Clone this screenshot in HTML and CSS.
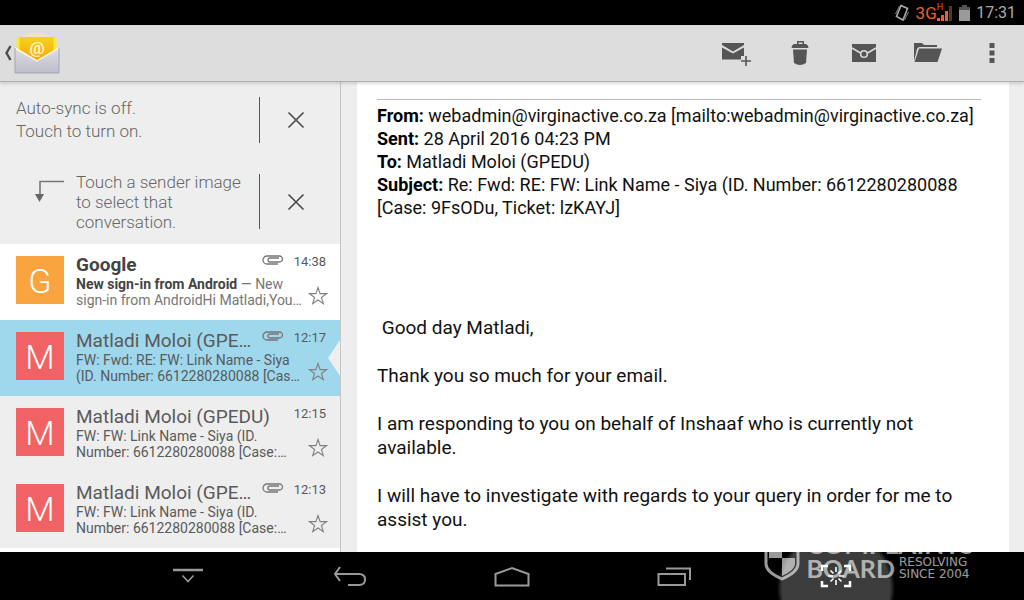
FILE: index.html
```html
<!DOCTYPE html>
<html lang="en">
<head>
    <meta charset="UTF-8">
    <meta name="viewport" content="width=device-width, initial-scale=1.0">
    <title>Email</title>
    <link rel="stylesheet" href="styles.css">
</head>
<body>
    <!-- Shared icons -->
    <svg class="sprite" width="0" height="0">
        <symbol id="close" viewBox="0 0 18 18"><path d="M1.500 1.500l15 15M16.500 1.500l-15 15" fill="none" stroke="#4a4a4a" stroke-width="1.600"/></symbol>
        <symbol id="clip" viewBox="0 0 22 10"><path d="M17 3H8a2 2 0 0 0 0 4h9.500a3 3 0 0 0 0-6H5a4 4 0 0 0 0 8h11" fill="none" stroke="#777" stroke-width="1.300"/></symbol>
        <symbol id="star" viewBox="0 0 20 20"><path d="M10 1.500l2.100 6.100h6.400l-5.100 3.900 1.900 6.200-5.300-3.700-5.300 3.700 1.900-6.200-5.100-3.900h6.400z" fill="none" stroke="#808080" stroke-width="1.100"/></symbol>
    </svg>

    <div class="status-bar">
        <svg width="16" height="18" viewBox="0 0 16 18" fill="none" stroke="#aaa" stroke-width="1.600">
            <path d="M7 1.500l6.500 3L9 16l-6.500-3.500z"/>
            <path d="M1.500 10l4-8M14.500 8l-4 8" stroke="#888" stroke-width="1"/>
        </svg>
        <div class="signal">
            <span class="network">3G</span>
            <span class="hspa">H</span>
            <svg width="16" height="16" viewBox="0 0 16 16">
                <path d="M0 16v-3h3v3zM4 16v-6h3v6zM8 16V6h3v10z" fill="#e8642a"/>
                <path d="M12 16V1h3v15z" fill="#533a22"/>
            </svg>
        </div>
        <svg width="11" height="16" viewBox="0 0 11 16">
            <path d="M3 0h5v2h3v14H0V2h3z" fill="#9a9a9a"/>
            <path d="M3 0h5v2h3v3H0V2h3z" fill="#555"/>
        </svg>
        <span class="clock">17:31</span>
    </div>

    <header class="action-bar">
        <button class="up" aria-label="Back">
            <svg width="8" height="16" viewBox="0 0 8 16"><path d="M6.500 1L2.500 8l4 7" fill="none" stroke="#4d4d4d" stroke-width="2.400"/></svg>
            <svg width="46" height="42" viewBox="0 0 46 42">
                <defs>
                    <linearGradient id="gold" x2="0" y2="1"><stop stop-color="#f5d21c"/><stop offset="1" stop-color="#f7a50c"/></linearGradient>
                    <linearGradient id="paper" x2="0" y2="1"><stop stop-color="#dedee4"/><stop offset="1" stop-color="#bdbdcb"/></linearGradient>
                </defs>
                <path d="M8 5Q23-3 37 5z" fill="#efe5c4"/>
                <path d="M3 5h39v15L23 30 3 18z" fill="url(#gold)"/>
                <path d="M4 5v13M41 5v13" stroke="#fbe93a" stroke-width="3"/>
                <path d="M1 16l22 13 22-13v25H1z" fill="url(#paper)"/>
                <path d="M1 16l22 13 22-13" fill="none" stroke="#fff8e0" stroke-width="1.500"/>
                <path d="M1 16v25h44V16" fill="none" stroke="#a4a4b0"/>
                <text x="23" y="22" text-anchor="middle" class="at">@</text>
            </svg>
        </button>
        <nav class="actions">
            <button aria-label="Compose">
                <svg width="32" height="28" viewBox="0 0 32 28">
                    <path d="M2 4h22v2l-11 6.500L2 6zM2 8.500l11 6 11-6V17h-3v3.500H2z" fill="#555"/>
                    <path d="M26 17v10M21 22h10" stroke="#555" stroke-width="1.600"/>
                </svg>
            </button>
            <button aria-label="Delete">
                <svg width="18" height="26" viewBox="0 0 18 26" fill="#555">
                    <path d="M6 1h7v4h-1.500V2.500h-4V5H6z"/>
                    <path d="M3 4h12q2.500 1 2.500 4H.5Q.5 5 3 4zM2 9.500h14L15 23q-6 4-12 0z"/>
                </svg>
            </button>
            <button aria-label="Mark as unread">
                <svg width="26" height="22" viewBox="0 0 26 22">
                    <path d="M1 2h24v18H1z" fill="#555"/>
                    <path d="M1 6l8.500 5M25 6l-8.500 5" stroke="#ddd" stroke-width="1.500"/>
                    <circle cx="13" cy="12" r="3.300" fill="#555" stroke="#ddd" stroke-width="1.500"/>
                </svg>
            </button>
            <button aria-label="Move to folder">
                <svg width="28" height="22" viewBox="0 0 28 22" fill="#555">
                    <path d="M0 1h8l2 2h13v2H6q-3 0-3.500 4L0 19z"/>
                    <path d="M5 6.500h23L23.500 20H.5z"/>
                </svg>
            </button>
            <button aria-label="More options">
                <svg width="6" height="22" viewBox="0 0 6 22" fill="#555"><path d="M.5 1h5v5h-5zM.5 8.500h5v5h-5zM.5 16h5v5h-5z"/></svg>
            </button>
        </nav>
    </header>

    <main class="panes">
        <section class="conversations">
            <div class="tip sync">
                <p>Auto-sync is off.<br>Touch to turn on.</p>
                <button class="dismiss" aria-label="Dismiss"><svg width="18" height="18"><use href="#close"/></svg></button>
            </div>
            <div class="tip sender">
                <svg class="tip-arrow" width="30" height="24" viewBox="0 0 30 24">
                    <path d="M30 1.500H6V14" fill="none" stroke="#777" stroke-width="1.600"/>
                    <path d="M1 14h9l-4.500 8z" fill="#666"/>
                </svg>
                <p>Touch a sender image to select that conversation.</p>
                <button class="dismiss" aria-label="Dismiss"><svg width="18" height="18"><use href="#close"/></svg></button>
            </div>

            <ul class="list">
                <li class="item unread">
                    <div class="avatar google">G</div>
                    <div class="summary">
                        <div class="top">
                            <h2>Google</h2>
                            <svg class="clip" width="22" height="10"><use href="#clip"/></svg>
                            <time>14:38</time>
                        </div>
                        <div class="bottom">
                            <p><b>New sign-in from Android</b> — New sign-in from AndroidHi Matladi,You have signed in</p>
                            <button class="star" aria-label="Star"><svg width="20" height="20"><use href="#star"/></svg></button>
                        </div>
                    </div>
                </li>
                <li class="item selected">
                    <div class="avatar">M</div>
                    <div class="summary">
                        <div class="top">
                            <h2>Matladi Moloi (GPEDU)</h2>
                            <svg class="clip" width="22" height="10"><use href="#clip"/></svg>
                            <time>12:17</time>
                        </div>
                        <div class="bottom">
                            <p>FW: Fwd: RE: FW: Link Name - Siya (ID. Number: 6612280280088 [Case: 9FsODu]</p>
                            <button class="star" aria-label="Star"><svg width="20" height="20"><use href="#star"/></svg></button>
                        </div>
                    </div>
                </li>
                <li class="item">
                    <div class="avatar">M</div>
                    <div class="summary">
                        <div class="top">
                            <h2>Matladi Moloi (GPEDU)</h2>
                            <time>12:15</time>
                        </div>
                        <div class="bottom">
                            <p>FW: FW: Link Name - Siya (ID. Number: 6612280280088 [Case: 9FsODu]</p>
                            <button class="star" aria-label="Star"><svg width="20" height="20"><use href="#star"/></svg></button>
                        </div>
                    </div>
                </li>
                <li class="item">
                    <div class="avatar">M</div>
                    <div class="summary">
                        <div class="top">
                            <h2>Matladi Moloi (GPEDU)</h2>
                            <svg class="clip" width="22" height="10"><use href="#clip"/></svg>
                            <time>12:13</time>
                        </div>
                        <div class="bottom">
                            <p>FW: FW: Link Name - Siya (ID. Number: 6612280280088 [Case: 9FsODu]</p>
                            <button class="star" aria-label="Star"><svg width="20" height="20"><use href="#star"/></svg></button>
                        </div>
                    </div>
                </li>
            </ul>
        </section>

        <article class="message">
            <div class="quoted">
                <b>From:</b> webadmin@virginactive.co.za [mailto:webadmin@virginactive.co.za]<br>
                <b>Sent:</b> 28 April 2016 04:23 PM<br>
                <b>To:</b> Matladi Moloi (GPEDU)<br>
                <b>Subject:</b> Re: Fwd: RE: FW: Link Name - Siya (ID. Number: 6612280280088 [Case: 9FsODu, Ticket: lzKAYJ]
            </div>
            <div class="body-text">
                <p>&nbsp;Good day Matladi,</p>
                <p>Thank you so much for your email.</p>
                <p>I am responding to you on behalf of Inshaaf who is currently not available.</p>
                <p>I will have to investigate with regards to your query in order for me to assist you.</p>
            </div>
        </article>
    </main>

    <footer class="nav-bar">
        <button aria-label="Hide bar">
            <svg width="32" height="18" viewBox="0 0 32 18" fill="none" stroke="#999"><path d="M1 3h30" stroke-width="2.500"/><path d="M10.500 8.500l5.500 6 5.500-6" stroke-width="1.600"/></svg>
        </button>
        <button aria-label="Back">
            <svg width="34" height="22" viewBox="0 0 34 22" fill="none" stroke="#999" stroke-width="2"><path d="M7 2L2 9l5 7M2 9h24q6 0 6 5.500T26 20H15"/></svg>
        </button>
        <button aria-label="Home">
            <svg width="36" height="22" viewBox="0 0 36 22" fill="none" stroke="#999" stroke-width="2"><path d="M1.500 20.500V9L18 3l16.500 6v11.500z"/></svg>
        </button>
        <button aria-label="Recent apps">
            <svg width="34" height="20" viewBox="0 0 34 20" fill="none" stroke="#999" stroke-width="2"><path d="M1.500 8H28v11H1.500zM9 2.500h24V14"/></svg>
        </button>
        <button class="capture" aria-label="Screenshot">
            <svg width="32" height="24" viewBox="0 0 32 24" fill="none" stroke="#fff" stroke-width="2.500">
                <path d="M2 7V2h6M24 2h6v5M30 17v5h-6M8 22H2v-5"/>
                <path d="M16 3v5M16 16v5M8 12h5M19 12h5M10.500 6.500l3 3M21.500 6.500l-3 3M10.500 17.500l3-3M21.500 17.500l-3-3" stroke-width="1.600"/>
            </svg>
        </button>
        <div class="watermark">
            <svg width="36" height="46" viewBox="0 0 36 46">
                <path d="M2 2h32v27q0 8-16 15Q2 37 2 29z" fill="none" stroke="#fff" stroke-width="3"/>
                <path d="M5 5h13v18H5zM18 23h13v6q0 6-13 12z" fill="#fff"/>
            </svg>
            <div class="brand">
                <div class="brand-name">COMPLAINTS</div>
                <div class="brand-row">BOARD <small>RESOLVING<br>SINCE 2004</small></div>
            </div>
        </div>
    </footer>
</body>
</html>
```
FILE: styles.css
```css
* {
    box-sizing: border-box;
}

body {
    margin: 0;
    height: 100vh;
    display: flex;
    flex-direction: column;
    overflow: hidden;
    font-family: Roboto, "Liberation Sans", sans-serif;
    background-color: #fff;
}

h2, p, ul {
    margin: 0;
    padding: 0;
}

button {
    display: flex;
    align-items: center;
    justify-content: center;
    padding: 0;
    border: none;
    background: none;
    cursor: pointer;
}

svg {
    display: block;
    flex: none;
}

.sprite {
    position: absolute;
}

/* status bar */
.status-bar {
    display: flex;
    align-items: center;
    justify-content: flex-end;
    gap: 6px;
    height: 25px;
    flex: none;
    padding-right: 8px;
    background-color: #000;
    color: #aaa;
}

.signal {
    display: flex;
    align-items: center;
    color: #e8642a;
}

.network {
    font-size: 17px;
}

.hspa {
    align-self: flex-start;
    font-size: 9px;
    line-height: 9px;
}

.signal svg {
    margin-left: -6px;
}

.clock {
    font-size: 16px;
}

/* action bar */
.action-bar {
    display: flex;
    justify-content: space-between;
    height: 57px;
    flex: none;
    background-color: #ddd;
    border-bottom: 1px solid #b0b0b0;
    box-shadow: 0 1px 4px rgba(0, 0, 0, 0.2);
    z-index: 1;
}

.up {
    gap: 2px;
    padding-left: 4px;
}

.at {
    font: 700 17px Roboto, sans-serif;
    fill: #fff3c0;
}

.actions {
    display: flex;
}

.actions button {
    width: 64px;
}

/* panes */
.panes {
    display: flex;
    flex: 1;
    min-height: 0;
    background-color: #eee;
}

.conversations {
    width: 341px;
    flex: none;
    overflow: hidden;
    border-right: 1px solid #c6c6c6;
    background-color: #fff;
}

.tip {
    display: flex;
    background-color: #eee;
    color: #666;
    font-size: 17px;
    font-weight: 300;
}

.tip p {
    flex: 1;
}

.sync {
    padding: 15px 0 17px 16px;
    line-height: 23px;
}

.sender {
    padding: 12px 0;
    line-height: 20px;
}

.sender p {
    padding-right: 12px;
}

.tip-arrow {
    margin: 8px 12px 0 34px;
}

.dismiss {
    width: 81px;
    padding-right: 8px;
    border-left: 1px solid #555;
}

.sender .dismiss {
    margin: 2px 0 3px;
}

.list {
    list-style: none;
}

.item {
    display: flex;
    gap: 12px;
    height: 76px;
    padding: 12px 14px 0 16px;
    background-color: #eee;
    color: #5a5a5a;
}

.selected {
    position: relative;
    background-color: #9fd7ec;
}

/* notch pointing at the open conversation */
.selected::after {
    content: "";
    position: absolute;
    top: 20px;
    right: 0;
    border: 18px solid transparent;
    border-left: none;
    border-right: 12px solid #eee;
}

.avatar {
    width: 48px;
    height: 48px;
    flex: none;
    background-color: #f06263;
    color: #fff;
    font-size: 34px;
    font-weight: 300;
    line-height: 50px;
    text-align: center;
}

.google {
    background-color: #f9a43e;
}

.summary {
    flex: 1;
    min-width: 0;
}

.top {
    display: flex;
    height: 20px;
}

.top h2 {
    flex: 1;
    margin-top: -3px;
    overflow: hidden;
    white-space: nowrap;
    text-overflow: ellipsis;
    font-size: 19px;
    font-weight: 400;
    line-height: 23px;
}

.clip {
    margin: -1px 10px 0 8px;
}

.top time {
    color: #5a5a5a;
    font-size: 13px;
    line-height: 12px;
}

.bottom {
    display: flex;
    justify-content: space-between;
}

.bottom p {
    display: -webkit-box;
    width: 226px;
    height: 32px;
    overflow: hidden;
    -webkit-box-orient: vertical;
    -webkit-line-clamp: 2;
    font-size: 14px;
    line-height: 16px;
}

.unread {
    background-color: #fff;
    color: #777;
}

.unread h2, .unread b {
    color: #444;
    font-weight: 700;
}

.star {
    align-self: flex-end;
    margin: 0 -2px 2px 0;
}

/* message */
.message {
    flex: 1;
    margin: 0 15px 0 16px;
    padding: 17px 28px 0 20px;
    overflow: hidden;
    background-color: #fff;
    color: #111;
}

.quoted {
    padding-top: 4px;
    border-top: 1px solid #bbb;
    font-size: 18px;
    line-height: 23px;
}

.quoted b {
    color: #000;
}

.body-text {
    padding-top: 97px;
    font-size: 19px;
    line-height: 24px;
}

.body-text p {
    margin-bottom: 24px;
}

/* navigation bar */
.nav-bar {
    position: relative;
    display: flex;
    justify-content: center;
    height: 48px;
    flex: none;
    overflow: hidden;
    background-color: #000;
}

.nav-bar button {
    width: 162px;
}

.nav-bar .capture {
    background: radial-gradient(circle at 50% 36px, #3c3c3c 54px, #000 59px);
}

.watermark {
    position: absolute;
    right: 50px;
    bottom: 19px;
    display: flex;
    align-items: flex-end;
    gap: 6px;
    color: #fff;
    opacity: 0.6;
}

.brand {
    padding-bottom: 1px;
    font-family: Lato, sans-serif;
    font-size: 25px;
    font-weight: 700;
    line-height: 24px;
}

.brand-name {
    font-size: 26px;
}

.brand-row {
    display: flex;
    align-items: center;
    gap: 4px;
}

.brand small {
    font: 12px/12px "DejaVu Sans", sans-serif;
}
```
